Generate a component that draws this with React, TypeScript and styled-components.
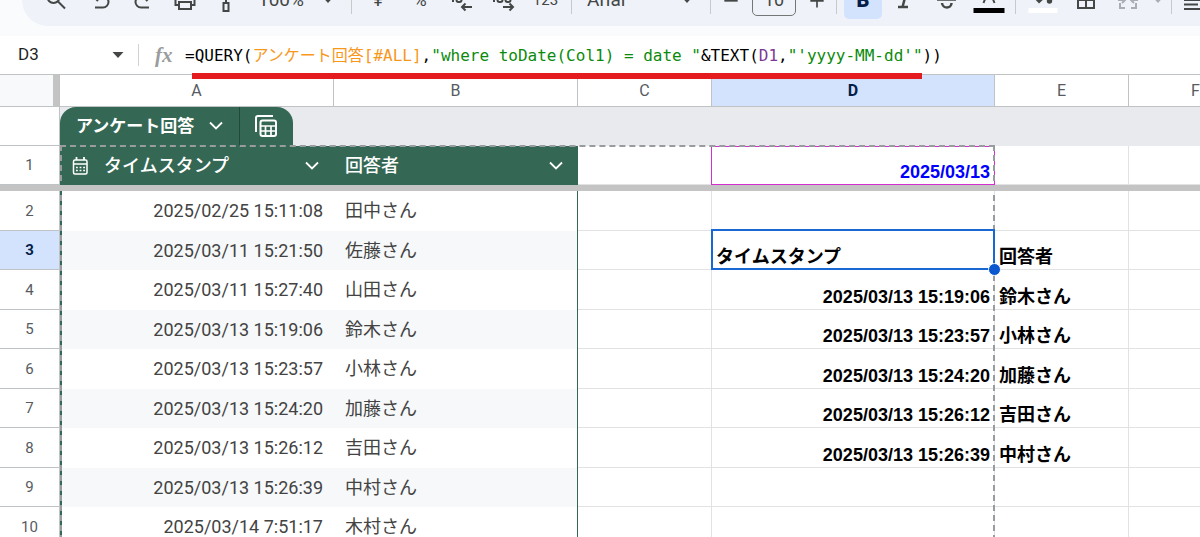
import React from "react";
import styled, { createGlobalStyle, css } from "styled-components";

const GlobalStyle = createGlobalStyle`
  *, *::before, *::after { box-sizing: border-box; }
  body {
    margin: 0;
    background: #ffffff;
    font-family: Roboto, "Noto Sans CJK JP", sans-serif;
    color: #444746;
  }
  button, input, select { font: inherit; color: inherit; }
`;

const GREEN = "#356854";
const LINE = "#c0c3c6";
const GRID = "#e1e2e3";

const Page = styled.div`
  display: flex;
  flex-direction: column;
  height: 100vh;
  overflow: hidden;
`;

const ToolbarArea = styled.header`
  flex: none;
  margin-top: -27px;
  padding: 0 0 10px 22px;
  background: #f9fbfd;
`;

const Toolbar = styled.div`
  display: flex;
  align-items: center;
  height: 53px;
  padding-left: 13px;
  border-radius: 26px 0 0 26px;
  background: #eff3f9;
  overflow: hidden;
`;

const ToolButton = styled.button<{ $width?: number }>`
  flex: none;
  display: flex;
  align-items: center;
  justify-content: center;
  width: ${(p) => p.$width ?? 42}px;
  height: 38px;
  padding: 0;
  border: 0;
  background: none;
  font-size: 18px;
`;

const ToggleFace = styled.span`
  display: flex;
  align-items: center;
  justify-content: center;
  width: 38px;
  height: 38px;
  border-radius: 5px;
  background: #d3e3fd;
  color: #041e49;
  font-size: 20px;
  font-weight: 900;
`;

const Separator = styled.span`
  flex: none;
  width: 1px;
  height: 28px;
  margin: 0 5px;
  background: #c7cacd;
`;

const SelectBox = styled.label<{ $width: number }>`
  flex: none;
  display: flex;
  align-items: center;
  width: ${(p) => p.$width}px;
  padding: 0 12px 0 10px;
  font-size: 19px;
`;

const PlainSelect = styled.select`
  flex: 1;
  min-width: 0;
  padding: 0;
  border: 0;
  background: none;
  appearance: none;
`;

const SizeInput = styled.input`
  flex: none;
  width: 44px;
  height: 33px;
  margin: 0 6px;
  padding: 0;
  border: 1px solid #747775;
  border-radius: 5px;
  background: none;
  font-size: 18px;
  text-align: center;
`;

const FormulaBar = styled.div`
  flex: none;
  display: flex;
  align-items: center;
  height: 39px;
  border-bottom: 1px solid ${LINE};
  background: #ffffff;
`;

const NameBox = styled.div`
  flex: none;
  display: flex;
  align-items: center;
  width: 139px;
  height: 22px;
  padding-left: 18px;
  border-right: 1px solid #d0d2d5;
`;

const NameInput = styled.input`
  width: 80px;
  height: 22px;
  padding: 0 0 2px;
  border: 0;
  background: none;
  color: #1f1f1f;
  font-size: 17px;
`;

const CaretButton = styled.button`
  display: flex;
  align-items: center;
  justify-content: center;
  width: 40px;
  height: 22px;
  padding: 0;
  border: 0;
  background: none;
`;

const FxMark = styled.span`
  flex: none;
  width: 46px;
  padding-left: 16px;
  color: #9a9c9e;
  font-family: "Liberation Serif", serif;
  font-size: 21px;
  font-style: italic;
  font-weight: 700;
  line-height: 24px;
`;

const Formula = styled.div`
  position: relative;
  flex: 1;
  height: 38px;
  color: #000000;
  font-family: "DejaVu Sans Mono", "Noto Sans CJK JP", monospace;
  font-size: 16px;
  line-height: 40px;
  white-space: pre;
`;

const Token = styled.span<{ $color: string }>`
  color: ${(p) => p.$color};
`;

const Underline = styled.span`
  position: absolute;
  z-index: 3;
  top: 37px;
  left: 7px;
  width: 730px;
  height: 6px;
  background: #e41b1f;
`;

const SheetArea = styled.main`
  position: relative;
  flex: 1;
  min-height: 0;
  overflow: hidden;
`;

const Sheet = styled.table`
  width: 100%;
  min-width: 1263px;
  border-collapse: separate;
  border-spacing: 0;
  table-layout: fixed;
  font-size: 18px;
  line-height: 24px;

  th, td { padding: 0; }
`;

const Corner = styled.td`
  height: 32px;
  border-right: 1px solid ${LINE};
  border-bottom: 1px solid ${LINE};
  background: linear-gradient(to left, #c4c4c4 6px, #f8f9fa 6px);
`;

const ColumnHead = styled.th<{ $active?: boolean }>`
  border-right: 1px solid ${LINE};
  border-bottom: 1px solid ${LINE};
  background: ${(p) => (p.$active ? "#d3e3fd" : "#ffffff")};
  color: ${(p) => (p.$active ? "#041e49" : "#575b5f")};
  font-size: 16px;
  font-weight: ${(p) => (p.$active ? 700 : 400)};
`;

const RowHead = styled.th<{ $active?: boolean }>`
  border-right: 1px solid ${LINE};
  border-bottom: 1px solid ${LINE};
  background: ${(p) => (p.$active ? "#d3e3fd" : "#ffffff")};
  color: ${(p) => (p.$active ? "#041e49" : "#575b5f")};
  font-size: 15px;
  font-weight: ${(p) => (p.$active ? 700 : 400)};
`;

const TabRow = styled.tr`
  height: 39px;
`;

const TabCell = styled.td`
  background: #e8eaed;
  vertical-align: bottom;
`;

const TableTab = styled.div`
  display: flex;
  width: 233px;
  height: 39px;
  border-radius: 16px 16px 0 0;
  background: ${GREEN};
  color: #ffffff;
`;

const TabName = styled.button`
  display: flex;
  align-items: center;
  justify-content: space-between;
  width: 180px;
  padding: 0 16px 2px 16px;
  border: 0;
  border-right: 1px solid #204b3a;
  background: none;
  font-size: 17px;
  font-weight: 700;
`;

const TabView = styled.button`
  display: flex;
  flex: 1;
  align-items: center;
  justify-content: center;
  padding: 0 2px 2px 0;
  border: 0;
  background: none;
`;

const HeadRow = styled.tr`
  height: 39px;
`;

const FieldHead = styled.th`
  background: ${GREEN};
  color: #ffffff;
  font-weight: 500;
`;

const FieldLabel = styled.div`
  display: flex;
  align-items: center;
  padding: 0 15px 0 11px;

  span { flex: 1; text-align: left; }
  svg:first-child { margin-right: 15px; }
`;

const FreezeBar = styled.td`
  position: relative;
  z-index: 2;
  height: 6px;
  background: #c4c4c4;
`;

const DataRow = styled.tr<{ $banded: boolean }>`
  height: ${(p) => (p.$banded ? 39 : 40)}px;
`;

const FieldCell = styled.td<{ $banded: boolean; $align: "left" | "right" }>`
  background: ${(p) => (p.$banded ? "#f6f8f9" : "#ffffff")};
  color: #434343;
  text-align: ${(p) => p.$align};

  && { padding: 0 11px; }

  &:nth-child(2) { border-left: 2px solid ${GREEN}; }
  &:nth-child(3) { border-right: 1px solid ${GREEN}; }
`;

const Cell = styled.td<{ $align?: "left" | "right"; $color?: string; $referenced?: boolean }>`
  position: relative;
  border-right: 1px solid ${GRID};
  border-bottom: 1px solid ${GRID};
  color: ${(p) => p.$color ?? "#000000"};
  font-family: "Liberation Sans", "Noto Sans CJK JP", sans-serif;
  font-weight: 700;
  text-align: ${(p) => p.$align ?? "left"};
  vertical-align: bottom;
  white-space: nowrap;

  && { padding: 0 4px; }

  ${(p) =>
    p.$referenced &&
    css`
      &::before {
        content: "";
        position: absolute;
        inset: 0 -1px -1px -1px;
        border: 1px solid #d32fcd;
      }
    `}
`;

const Selection = styled.span`
  position: absolute;
  z-index: 2;
  inset: -2px -1px -1px -1px;
  border: 2px solid #1967d2;

  &::after {
    content: "";
    position: absolute;
    right: -8px;
    bottom: -8px;
    width: 13px;
    height: 13px;
    border: 1px solid #ffffff;
    border-radius: 50%;
    background: #0b57d0;
  }
`;

const RangeOutline = styled.div`
  position: absolute;
  z-index: 1;
  top: 70px;
  bottom: -4px;
  left: 60px;
  width: 935px;
  border: 2px dashed #989c9e;
  pointer-events: none;
`;

const Caret = ({ color = "#444746" }: { color?: string }) => (
  <svg width="12" height="6" viewBox="0 0 12 6" aria-hidden="true">
    <path d="M0.5 0h11L6 6z" fill={color} />
  </svg>
);

const Chevron = () => (
  <svg width="14" height="9" viewBox="0 0 14 9" aria-hidden="true">
    <path d="M1 1.500 7 7.500l6-6" fill="none" stroke="#ffffff" strokeWidth="1.800" />
  </svg>
);

const Icon = ({ children, size = 24 }: { children: React.ReactNode; size?: number }) => (
  <svg
    width={size}
    height={size}
    viewBox="0 0 24 24"
    fill="none"
    stroke="currentColor"
    strokeWidth="2"
    aria-hidden="true"
  >
    {children}
  </svg>
);

const CalendarIcon = () => (
  <svg width="18" height="20" viewBox="0 0 18 20" fill="none" stroke="#ffffff" aria-hidden="true">
    <rect x="2.500" y="4" width="13.500" height="14" rx="1.500" strokeWidth="1.500" />
    <path d="M5.500 1v3M13 1v3" strokeWidth="1.800" />
    <path d="M2.500 8h13.500" strokeWidth="1.500" />
    <path d="M5 11.500h9M5 14.500h9" strokeWidth="1.700" strokeDasharray="1.800 1.800" />
  </svg>
);

const TableViewIcon = () => (
  <svg width="22" height="22" viewBox="0 0 22 22" fill="none" stroke="#ffffff" aria-hidden="true">
    <path d="M1 17V3a2 2 0 0 1 2-2h15" strokeWidth="2" />
    <rect x="5.500" y="5.500" width="15.500" height="15.500" rx="2" strokeWidth="2" />
    <path d="M6 11h15M6 16h15M10.500 11v10M16 11v10" strokeWidth="1.700" />
  </svg>
);

const columns = ["A", "B", "C", "D", "E", "F"];

const rows = [
  { n: 2, time: "2025/02/25 15:11:08", name: "田中さん" },
  { n: 3, time: "2025/03/11 15:21:50", name: "佐藤さん", d: "タイムスタンプ", e: "回答者" },
  { n: 4, time: "2025/03/11 15:27:40", name: "山田さん", d: "2025/03/13 15:19:06", e: "鈴木さん" },
  { n: 5, time: "2025/03/13 15:19:06", name: "鈴木さん", d: "2025/03/13 15:23:57", e: "小林さん" },
  { n: 6, time: "2025/03/13 15:23:57", name: "小林さん", d: "2025/03/13 15:24:20", e: "加藤さん" },
  { n: 7, time: "2025/03/13 15:24:20", name: "加藤さん", d: "2025/03/13 15:26:12", e: "吉田さん" },
  { n: 8, time: "2025/03/13 15:26:12", name: "吉田さん", d: "2025/03/13 15:26:39", e: "中村さん" },
  { n: 9, time: "2025/03/13 15:26:39", name: "中村さん" },
  { n: 10, time: "2025/03/14 7:51:17", name: "木村さん" },
];

const MainToolbar = () => (
  <Toolbar role="toolbar" aria-label="ツールバー">
    <ToolButton $width={45} aria-label="検索">
      <Icon><circle cx="7.500" cy="9" r="6" /><path d="m12 13.500 7 7" /></Icon>
    </ToolButton>
    <ToolButton aria-label="元に戻す">
      <Icon><path d="M9 4 4.500 8.500 9 13M5 8.500h9a5.500 5.500 0 0 1 0 11H6" /></Icon>
    </ToolButton>
    <ToolButton aria-label="やり直し">
      <Icon><path d="m15 4 4.500 4.500L15 13M19 8.500h-9a5.500 5.500 0 0 0 0 11h8" /></Icon>
    </ToolButton>
    <ToolButton aria-label="印刷">
      <Icon><path d="M6 8V4h12v4M6 17H2.500v-6a2 2 0 0 1 2-2h15a2 2 0 0 1 2 2v6H18M6 14h12v7H6z" /></Icon>
    </ToolButton>
    <ToolButton aria-label="書式を貼り付け">
      <Icon><path d="M4 2h13v5H4zM17 4h3v7h-9v4M8.500 15h5v8h-5z" /></Icon>
    </ToolButton>
    <SelectBox $width={98}>
      <PlainSelect aria-label="ズーム"><option>100%</option></PlainSelect>
      <Caret />
    </SelectBox>
    <Separator />
    <ToolButton aria-label="通貨">¥</ToolButton>
    <ToolButton aria-label="パーセント">%</ToolButton>
    <ToolButton aria-label="小数点以下を減らす">
      <Icon>
        <path d="M2 13h2" /><rect x="6.500" y="5" width="5" height="9" rx="2" />
        <path d="M22 19H12M15.500 15.500 12 19l3.500 3.500" />
      </Icon>
    </ToolButton>
    <ToolButton aria-label="小数点以下を増やす">
      <Icon>
        <path d="M1 13h2" /><rect x="5.500" y="5" width="5" height="9" rx="2" />
        <rect x="13.500" y="5" width="5" height="9" rx="2" />
        <path d="M11 19h10M17.500 15.500 21 19l-3.500 3.500" />
      </Icon>
    </ToolButton>
    <ToolButton $width={41} aria-label="表示形式">
      <small>123</small>
    </ToolButton>
    <Separator />
    <SelectBox $width={128}>
      <PlainSelect aria-label="フォント"><option>Arial</option></PlainSelect>
      <Caret />
    </SelectBox>
    <Separator />
    <ToolButton $width={30} aria-label="フォントサイズを縮小">
      <Icon size={20}><path d="M4 13h16" /></Icon>
    </ToolButton>
    <SizeInput aria-label="フォントサイズ" defaultValue="10" />
    <ToolButton $width={29} aria-label="フォントサイズを拡大">
      <Icon size={20}><path d="M4 13h16M12 5v16" /></Icon>
    </ToolButton>
    <Separator />
    <ToolButton aria-label="太字" aria-pressed="true"><ToggleFace>B</ToggleFace></ToolButton>
    <ToolButton aria-label="斜体">
      <Icon><path d="M9 4h9M13.500 4l-4 15M5 19h10" strokeWidth="2.500" /></Icon>
    </ToolButton>
    <ToolButton aria-label="取り消し線">
      <Icon>
        <path d="M2 12h19" strokeWidth="1.500" />
        <path d="M16 7c-1-4-9-4-9 0M7 15c0.500 6 9.500 6 9.500 0" strokeWidth="2.500" />
      </Icon>
    </ToolButton>
    <ToolButton aria-label="テキストの色">
      <svg width="32" height="28" viewBox="0 0 32 28" aria-hidden="true">
        <path d="M10.500 17 16 3l5.500 14M12.500 13h7" fill="none" stroke="#444746" strokeWidth="2" />
        <path d="M0.500 22h31v5h-31z" fill="#000000" />
      </svg>
    </ToolButton>
    <Separator />
    <ToolButton $width={44} aria-label="塗りつぶしの色">
      <svg width="30" height="28" viewBox="0 0 30 28" aria-hidden="true">
        <path d="m5 11 6-7 7 7-7 6.500z" fill="#444746" />
        <circle cx="21.500" cy="15" r="2.700" fill="#444746" />
        <path d="M0.500 22h29v5h-29z" fill="#ffffff" />
      </svg>
    </ToolButton>
    <ToolButton aria-label="枠線">
      <Icon><path d="M4 4h16v16H4zM12 4v16M4 12h16" /></Icon>
    </ToolButton>
    <ToolButton aria-label="セルを結合">
      <Icon>
        <g stroke="#aaaeb2">
          <path d="M9 4H4v5M15 4h5v5M4 15v5h5M20 15v5h-5M2 12h6M22 12h-6" />
          <path d="m6 9 3 3-3 3M18 9l-3 3 3 3" />
        </g>
      </Icon>
    </ToolButton>
    <ToolButton $width={17} aria-label="結合の種類"><Caret color="#aaaeb2" /></ToolButton>
    <Separator />
    <ToolButton $width={36} aria-label="水平方向の配置">
      <Icon><path d="M1 3h20M1 7.500h14M1 12h20M1 16.500h14M1 21h20" /></Icon>
    </ToolButton>
  </Toolbar>
);

export default function App() {
  return (
    <Page>
      <GlobalStyle />
      <ToolbarArea>
        <MainToolbar />
      </ToolbarArea>
      <FormulaBar>
        <NameBox>
          <NameInput aria-label="名前ボックス" defaultValue="D3" />
          <CaretButton aria-label="名前付き範囲"><Caret /></CaretButton>
        </NameBox>
        <FxMark>fx</FxMark>
        <Formula role="textbox" aria-label="数式">
          =QUERY(<Token $color="#f7981d">アンケート回答[#ALL]</Token>,
          <Token $color="#0b8a0b">"where toDate(Col1) = date "</Token>
          &amp;TEXT(<Token $color="#7e3794">D1</Token>,
          <Token $color="#0b8a0b">"'yyyy-MM-dd'"</Token>))
          <Underline />
        </Formula>
      </FormulaBar>
      <SheetArea>
        <Sheet>
          <colgroup>
            <col width="60" />
            <col width="274" />
            <col width="244" />
            <col width="134" />
            <col width="283" />
            <col width="134" />
            <col width="134" />
            <col />
          </colgroup>
          <thead>
            <tr>
              <Corner />
              {columns.map((c) => (
                <ColumnHead key={c} scope="col" $active={c === "D"}>{c}</ColumnHead>
              ))}
              <ColumnHead as="td" />
            </tr>
          </thead>
          <tbody>
            <TabRow>
              <RowHead as="td" />
              <TabCell colSpan={7}>
                <TableTab>
                  <TabName>アンケート回答<Chevron /></TabName>
                  <TabView aria-label="表示を切り替え"><TableViewIcon /></TabView>
                </TableTab>
              </TabCell>
            </TabRow>
            <HeadRow>
              <RowHead scope="row">1</RowHead>
              <FieldHead>
                <FieldLabel><CalendarIcon /><span>タイムスタンプ</span><Chevron /></FieldLabel>
              </FieldHead>
              <FieldHead>
                <FieldLabel><span>回答者</span><Chevron /></FieldLabel>
              </FieldHead>
              <Cell />
              <Cell $align="right" $color="#0000ff" $referenced>2025/03/13</Cell>
              <Cell />
              <Cell />
              <Cell />
            </HeadRow>
            <tr><FreezeBar colSpan={8} /></tr>
            {rows.map((r) => {
              const banded = r.n % 2 === 1;
              return (
                <DataRow key={r.n} $banded={banded}>
                  <RowHead scope="row" $active={r.n === 3}>{r.n}</RowHead>
                  <FieldCell $banded={banded} $align="right">{r.time}</FieldCell>
                  <FieldCell $banded={banded} $align="left">{r.name}</FieldCell>
                  <Cell />
                  <Cell $align={r.n === 3 ? "left" : "right"}>
                    {r.d}
                    {r.n === 3 && <Selection />}
                  </Cell>
                  <Cell>{r.e}</Cell>
                  <Cell />
                  <Cell />
                </DataRow>
              );
            })}
          </tbody>
        </Sheet>
        <RangeOutline />
      </SheetArea>
    </Page>
  );
}
